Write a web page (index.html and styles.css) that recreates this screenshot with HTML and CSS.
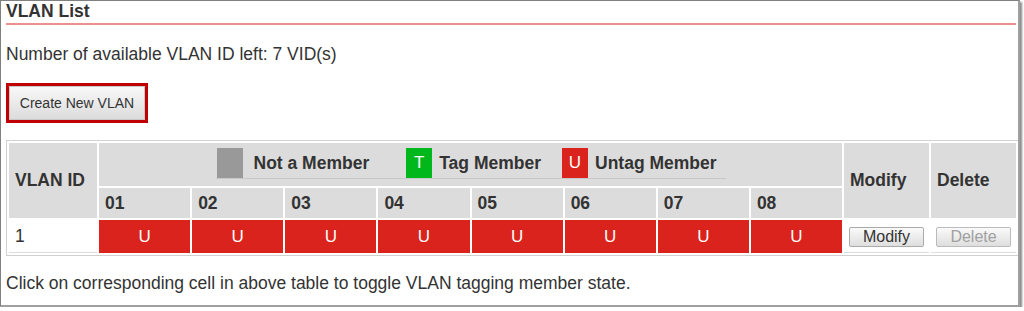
FILE: index.html
```html
<!DOCTYPE html>
<html lang="en">
<head>
    <meta charset="UTF-8">
    <title>VLAN List</title>
    <link rel="stylesheet" href="styles.css">
</head>
<body>
    <div class="frame">
        <h2 class="page-title">VLAN List</h2>

        <p class="info">Number of available VLAN ID left: 7 VID(s)</p>

        <div class="create-wrap">
            <button class="create-btn">Create New VLAN</button>
        </div>

        <table class="vlan-table">
            <colgroup>
                <col class="col-id">
                <col span="8">
                <col class="col-action">
                <col class="col-action">
            </colgroup>
            <tr>
                <th rowspan="2" class="head">VLAN ID</th>
                <th colspan="8" class="head legend-cell">
                    <div class="legend">
                        <span class="swatch swatch-none"></span>
                        <span class="legend-label label-none">Not a Member</span>
                        <span class="swatch swatch-tag">T</span>
                        <span class="legend-label label-tag">Tag Member</span>
                        <span class="swatch swatch-untag">U</span>
                        <span class="legend-label label-untag">Untag Member</span>
                    </div>
                </th>
                <th rowspan="2" class="head">Modify</th>
                <th rowspan="2" class="head">Delete</th>
            </tr>
            <tr>
                <th class="head port">01</th>
                <th class="head port">02</th>
                <th class="head port">03</th>
                <th class="head port">04</th>
                <th class="head port">05</th>
                <th class="head port">06</th>
                <th class="head port">07</th>
                <th class="head port">08</th>
            </tr>
            <tr>
                <td class="cell">1</td>
                <td class="cell member untag">U</td>
                <td class="cell member untag">U</td>
                <td class="cell member untag">U</td>
                <td class="cell member untag">U</td>
                <td class="cell member untag">U</td>
                <td class="cell member untag">U</td>
                <td class="cell member untag">U</td>
                <td class="cell member untag">U</td>
                <td class="cell action"><button class="small-btn">Modify</button></td>
                <td class="cell action"><button class="small-btn" disabled>Delete</button></td>
            </tr>
        </table>

        <p class="info hint">Click on corresponding cell in above table to toggle VLAN tagging member state.</p>
    </div>
</body>
</html>
```

FILE: styles.css
```css
/* Basic styling */
* {
    margin: 0;
    padding: 0;
    box-sizing: border-box;
    font-family: "Liberation Sans", Arial, sans-serif;
}

body {
    background-color: #fff;
    color: #333;
}

.frame {
    width: 1020px;
    height: 307px;
    border-top: 1px solid #808080;
    border-left: 1px solid #808080;
    border-right: 2px solid #a0a0a0;
    border-bottom: 2px solid #a0a0a0;
    box-shadow: 2px 2px 2px #888;
    padding: 0 2px 0 5px;
    overflow: hidden;
}

.page-title {
    font-size: 17.5px;
    font-weight: bold;
    line-height: 20px;
    padding-bottom: 2px;
    border-bottom: 2px solid #ee9090;
}

.info {
    font-size: 17.5px;
    line-height: 20px;
    margin-top: 19px;
}

.create-wrap {
    margin-top: 19px;
    display: inline-block;
    border: 3px solid #c00000;
}

.create-btn {
    display: block;
    width: 136px;
    height: 34px;
    font-size: 14px;
    color: #333;
    border: 1px solid #c8c8c8;
    background: linear-gradient(#f8f8f8, #dcdcdc);
}

.vlan-table {
    margin-top: 17px;
    width: 1013px;
    table-layout: fixed;
    border-collapse: separate;
    border-spacing: 2px;
    border: 1px solid #d0d0d0;
}

.col-id {
    width: 88px;
}

.col-action {
    width: 85px;
}

.head {
    background-color: #dcdcdc;
    font-size: 17.5px;
    font-weight: bold;
    text-align: left;
    padding-left: 6px;
    color: #333;
}

.port {
    height: 30px;
}

.legend-cell {
    height: 43px;
    padding: 5px 0 0;
    vertical-align: top;
}

.legend {
    display: flex;
    align-items: center;
    width: 510px;
    margin: 0 auto;
    border-bottom: 1px solid #c8c8c8;
}

.swatch {
    display: inline-flex;
    align-items: center;
    justify-content: center;
    width: 26px;
    height: 30px;
    color: #fff;
    font-size: 17px;
    font-weight: normal;
}

.swatch-none {
    margin-left: 1px;
    background-color: #999;
}

.swatch-tag {
    background-color: #00b81c;
}

.swatch-untag {
    background-color: #d9231c;
}

.label-none {
    margin: 0 37px 0 11px;
}

.label-tag {
    margin: 0 21px 0 7px;
}

.label-untag {
    margin-left: 7px;
}

.cell {
    height: 33px;
    font-size: 17.5px;
    padding-left: 6px;
    border-bottom: 1px solid #ddd;
}

.member {
    font-size: 17px;
    text-align: center;
    padding-left: 0;
    color: #fff;
    border-bottom: none;
}

.untag {
    background-color: #d9231c;
}

.action {
    padding-left: 5px;
}

.small-btn {
    width: 75px;
    height: 20px;
    font-size: 16px;
    color: #333;
    border: 1px solid #aaa;
    border-radius: 2px;
    background: linear-gradient(#fafafa, #dedede);
}

.small-btn:disabled {
    color: #a0a0a0;
    border-color: #bbb;
}

.hint {
    margin-top: 17px;
}
```
